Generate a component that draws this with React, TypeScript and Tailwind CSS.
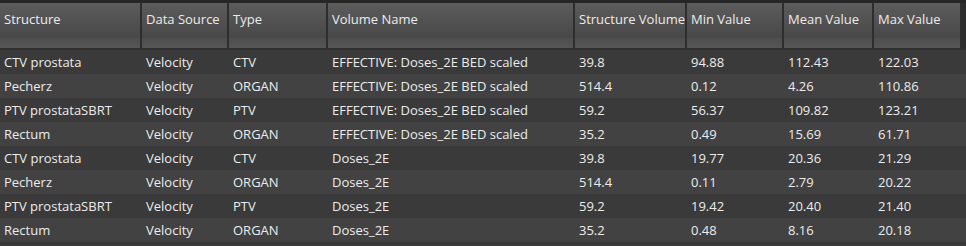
import React from "react";

const cols = [
  { name: "Structure", w: 142 },
  { name: "Data Source", w: 87 },
  { name: "Type", w: 99 },
  { name: "Volume Name", w: 247 },
  { name: "Structure Volume", w: 112 },
  { name: "Min Value", w: 97 },
  { name: "Mean Value", w: 90 },
  { name: "Max Value", w: 88 },
];

const rows = [
  ["CTV prostata", "Velocity", "CTV", "EFFECTIVE: Doses_2E BED scaled", "39.8", "94.88", "112.43", "122.03"],
  ["Pecherz", "Velocity", "ORGAN", "EFFECTIVE: Doses_2E BED scaled", "514.4", "0.12", "4.26", "110.86"],
  ["PTV prostataSBRT", "Velocity", "PTV", "EFFECTIVE: Doses_2E BED scaled", "59.2", "56.37", "109.82", "123.21"],
  ["Rectum", "Velocity", "ORGAN", "EFFECTIVE: Doses_2E BED scaled", "35.2", "0.49", "15.69", "61.71"],
  ["CTV prostata", "Velocity", "CTV", "Doses_2E", "39.8", "19.77", "20.36", "21.29"],
  ["Pecherz", "Velocity", "ORGAN", "Doses_2E", "514.4", "0.11", "2.79", "20.22"],
  ["PTV prostataSBRT", "Velocity", "PTV", "Doses_2E", "59.2", "19.42", "20.40", "21.40"],
  ["Rectum", "Velocity", "ORGAN", "Doses_2E", "35.2", "0.48", "8.16", "20.18"],
];

export default function App() {
  return (
    <div
      className="w-[966px] h-[246px] bg-[#383838] overflow-hidden text-[#ececec]"
      style={{ fontFamily: '"Open Sans", "Noto Sans", sans-serif' }}
    >
      <div className="h-[3px] bg-[#262626]" />
      <div className="flex h-[45px] bg-[#2c2c2c]">
        {cols.map((c, i) => (
          <div
            key={i}
            style={{ width: c.w }}
            className="flex flex-col shrink-0 border-r-2 border-[#2e2e2e]"
          >
            <div className="h-[35px] flex items-center pl-[4px] pb-[1px] text-[13px] whitespace-nowrap overflow-hidden bg-gradient-to-b from-[#5c5c5c] to-[#484848]">
              {c.name}
            </div>
            <div className="h-[10px] bg-gradient-to-b from-[#4e4e4e] to-[#565656]" />
          </div>
        ))}
      </div>
      <div className="h-[2px] bg-[#303030]" />
      {rows.map((r, ri) => (
        <div
          key={ri}
          className={`flex h-[24px] items-center ${ri % 2 === 0 ? "bg-[#3a3a3a]" : "bg-[#424242]"}`}
        >
          {r.map((cell, ci) => (
            <div
              key={ci}
              style={{ width: cols[ci].w }}
              className="shrink-0 pl-[4px] pt-[1px] text-[13px] whitespace-nowrap overflow-hidden"
            >
              {cell}
            </div>
          ))}
        </div>
      ))}
    </div>
  );
}
